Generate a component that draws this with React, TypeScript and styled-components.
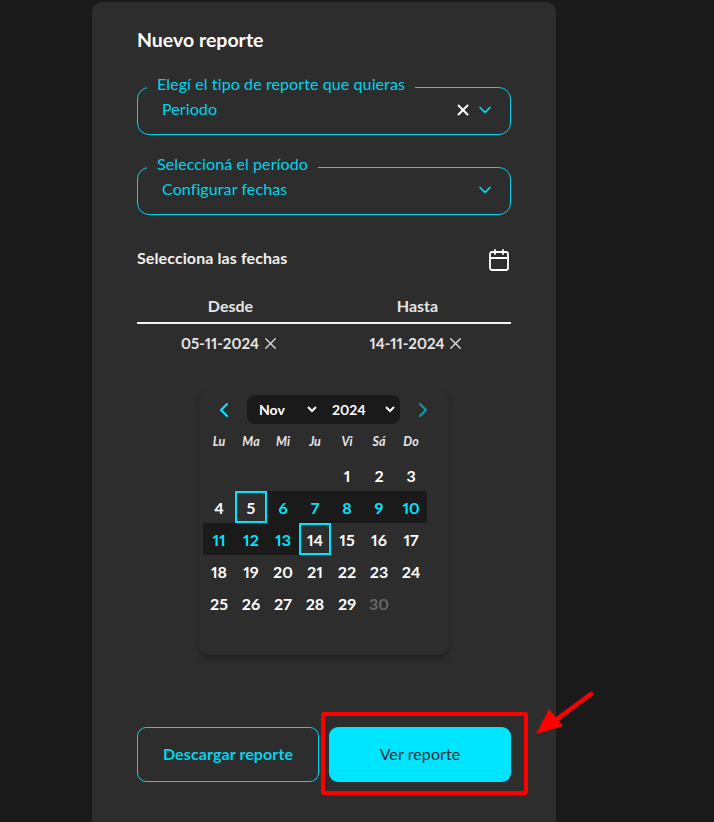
import styled, { createGlobalStyle } from 'styled-components';
import { Calendar, ChevronDown, ChevronLeft, ChevronRight, X } from 'lucide-react';

const CYAN = '#00e5ff';
const LINE = '#00d4ee';

const weekdays = ['Lu', 'Ma', 'Mi', 'Ju', 'Vi', 'Sá', 'Do'];
const FIRST_OFFSET = 4;
const START = 5;
const END = 14;
const DISABLED = 30;

const GlobalStyle = createGlobalStyle`
   html, body {
      margin: 0;
      height: 100%;
      background: #1a1a1a;
      overflow: hidden;
   }

   body, button, select {
      font-family: Lato, 'Liberation Sans', sans-serif;
      font-variant-numeric: proportional-nums;
   }
`;

const App = () => {
   const days = Array.from({ length: 30 }, (_, i) => i + 1);

   return (
      <Page>
         <GlobalStyle />
         <Card>
            <Title>Nuevo reporte</Title>

            <Field>
               <Legend>Elegí el tipo de reporte que quieras</Legend>
               <FieldValue>Periodo</FieldValue>
               <FieldIcons>
                  <X size={18} color="#fff" strokeWidth={2.6} />
                  <ChevronDown size={20} color={CYAN} strokeWidth={2} />
               </FieldIcons>
            </Field>

            <Field>
               <Legend>Seleccioná el período</Legend>
               <FieldValue>Configurar fechas</FieldValue>
               <FieldIcons>
                  <ChevronDown size={20} color={CYAN} strokeWidth={2} />
               </FieldIcons>
            </Field>

            <RangeHeader>
               <RangeTitle>Selecciona las fechas</RangeTitle>
               <Calendar size={24} color="#fff" strokeWidth={1.8} />
            </RangeHeader>

            <Tabs>
               <Tab>Desde</Tab>
               <Tab>Hasta</Tab>
            </Tabs>
            <Dates>
               <DateValue>
                  05-11-2024 <X size={19} strokeWidth={1.5} />
               </DateValue>
               <DateValue>
                  14-11-2024 <X size={19} strokeWidth={1.5} />
               </DateValue>
            </Dates>

            <Picker>
               <PickerNav>
                  <NavArrow>
                     <ChevronLeft size={24} color={CYAN} strokeWidth={2.2} />
                  </NavArrow>
                  <Selects>
                     <Select defaultValue="Nov">
                        <option>Nov</option>
                     </Select>
                     <Select defaultValue="2024">
                        <option>2024</option>
                     </Select>
                  </Selects>
                  <NavArrow>
                     <ChevronRight size={24} color="#0f97a8" strokeWidth={2.2} />
                  </NavArrow>
               </PickerNav>

               <Weekdays>
                  {weekdays.map(d => (
                     <Weekday key={d}>{d}</Weekday>
                  ))}
               </Weekdays>

               <Days>
                  {Array.from({ length: FIRST_OFFSET }, (_, i) => (
                     <span key={`empty-${i}`} />
                  ))}
                  {days.map(d => (
                     <Day
                        key={d}
                        $edge={d === START || d === END}
                        $between={d > START && d < END}
                        $off={d === DISABLED}
                     >
                        {d}
                     </Day>
                  ))}
               </Days>
            </Picker>

            <Actions>
               <OutlineButton>Descargar reporte</OutlineButton>
               <SolidButton>Ver reporte</SolidButton>
            </Actions>
         </Card>

         <Highlight />
         <Pointer width="70" height="56" viewBox="0 0 70 56">
            <path d="M58 5 L20 33" stroke="#f00" strokeWidth="4.5" strokeLinecap="round" fill="none" />
            <path d="M3 45 L16 20 L30 37 Z" fill="#f00" />
         </Pointer>
      </Page>
   );
};

export default App;

const Page = styled.div`
   position: relative;
   width: 714px;
   height: 822px;
   overflow: hidden;
   padding: 2px 0 0 92px;
   box-sizing: border-box;
`;

const Card = styled.div`
   width: 464px;
   height: 860px;
   box-sizing: border-box;
   padding: 27px 45px 0;
   background: #2d2d2d;
   border-radius: 10px 10px 0 0;
`;

const Title = styled.h1`
   margin: 0 0 25px;
   font-size: 19.5px;
   line-height: 22px;
   font-weight: 700;
   color: #fff;
`;

const Field = styled.fieldset`
   display: flex;
   align-items: center;
   height: 59px;
   margin: 0 0 21px;
   padding: 0 15px 16px 24px;
   box-sizing: border-box;
   border: 1px solid ${LINE};
   border-radius: 12px;
`;

const Legend = styled.legend`
   margin-left: -15px;
   padding: 0 10px 6px;
   font-size: 16px;
   letter-spacing: 0.1px;
   line-height: 16px;
   color: ${LINE};
`;

const FieldValue = styled.span`
   font-size: 16px;
   letter-spacing: 0.1px;
   color: ${LINE};
`;

const FieldIcons = styled.span`
   display: flex;
   align-items: center;
   gap: 3px;
   margin-left: auto;
   padding-top: 4px;
`;

const RangeHeader = styled.div`
   display: flex;
   justify-content: space-between;
   align-items: flex-start;
   height: 38px;
   margin-top: 33px;
`;

const RangeTitle = styled.h2`
   margin: 0;
   font-size: 16px;
   letter-spacing: 0.1px;
   line-height: 20px;
   font-weight: 700;
   color: #f0f0f0;
`;

const Tabs = styled.div`
   display: grid;
   grid-template-columns: 1fr 1fr;
   margin-top: 10px;
`;

const Tab = styled.div`
   height: 26px;
   border-bottom: 2px solid #f2f2f2;
   text-align: center;
   font-size: 16px;
   line-height: 20px;
   font-weight: 700;
   color: #e6e6e6;
`;

const Dates = styled.div`
   display: grid;
   grid-template-columns: 1fr 1fr;
   margin-top: 9px;
`;

const DateValue = styled.div`
   display: flex;
   justify-content: center;
   align-items: center;
   gap: 2px;
   font-size: 15px;
   line-height: 20px;
   font-weight: 700;
   color: #e6e6e6;
`;

const Picker = styled.div`
   width: 250px;
   height: 264px;
   margin: 38px auto 0;
   box-sizing: border-box;
   padding: 4px 4px 0;
   border-radius: 10px;
   background: #2d2d2d;
   box-shadow: 0 4px 7px -1px rgba(0, 0, 0, 0.35);
`;

const PickerNav = styled.div`
   display: flex;
   justify-content: space-between;
   align-items: center;
   height: 29px;
   padding: 0 10px 0 9px;
`;

const NavArrow = styled.span`
   display: flex;
`;

const Selects = styled.div`
   display: grid;
   grid-template-columns: 73px 78px;
   height: 29px;
   padding-right: 2px;
   border-radius: 8px;
   background: #1a1a1a;
`;

const Select = styled.select`
   appearance: auto;
   border: 0;
   padding: 0 0 0 8px;
   background: transparent;
   color: #fff;
   font-size: 14px;
   font-weight: 700;
   outline: none;
`;

const Weekdays = styled.div`
   display: grid;
   grid-template-columns: repeat(7, 32px);
   margin-top: 9px;
`;

const Weekday = styled.span`
   text-align: center;
   font-size: 12.5px;
   line-height: 18px;
   font-style: italic;
   font-weight: 700;
   color: #e6e6e6;
`;

const Days = styled.div`
   display: grid;
   grid-template-columns: repeat(7, 32px);
   grid-auto-rows: 32px;
   margin-top: 8px;
`;

const Day = styled.span<{ $edge?: boolean; $between?: boolean; $off?: boolean }>`
   display: flex;
   justify-content: center;
   align-items: center;
   box-sizing: border-box;
   font-size: 16px;
   font-weight: 700;
   color: ${p => (p.$off ? '#666' : p.$between ? CYAN : '#fff')};
   background: ${p => (p.$between ? '#1a1a1a' : 'transparent')};
   border: ${p => (p.$edge ? `2px solid ${CYAN}` : '0')};
`;

const Actions = styled.div`
   display: grid;
   grid-template-columns: 182px 182px;
   gap: 10px;
   margin-top: 72px;
`;

const OutlineButton = styled.button`
   height: 55px;
   padding: 0 0 2px;
   border: 1px solid ${LINE};
   border-radius: 9px;
   background: transparent;
   color: ${LINE};
   font-size: 16px;
   letter-spacing: 0.1px;
   font-weight: 700;
`;

const SolidButton = styled.button`
   height: 55px;
   padding: 0 0 2px;
   border: 0;
   border-radius: 9px;
   background: ${CYAN};
   color: #1f2d33;
   font-size: 16px;
   letter-spacing: 0.1px;
`;

const Highlight = styled.div`
   position: absolute;
   left: 321px;
   top: 712px;
   width: 207px;
   height: 83px;
   box-sizing: border-box;
   border: 4px solid #f00;
   border-radius: 3px;
`;

const Pointer = styled.svg`
   position: absolute;
   left: 533px;
   top: 689px;
`;
